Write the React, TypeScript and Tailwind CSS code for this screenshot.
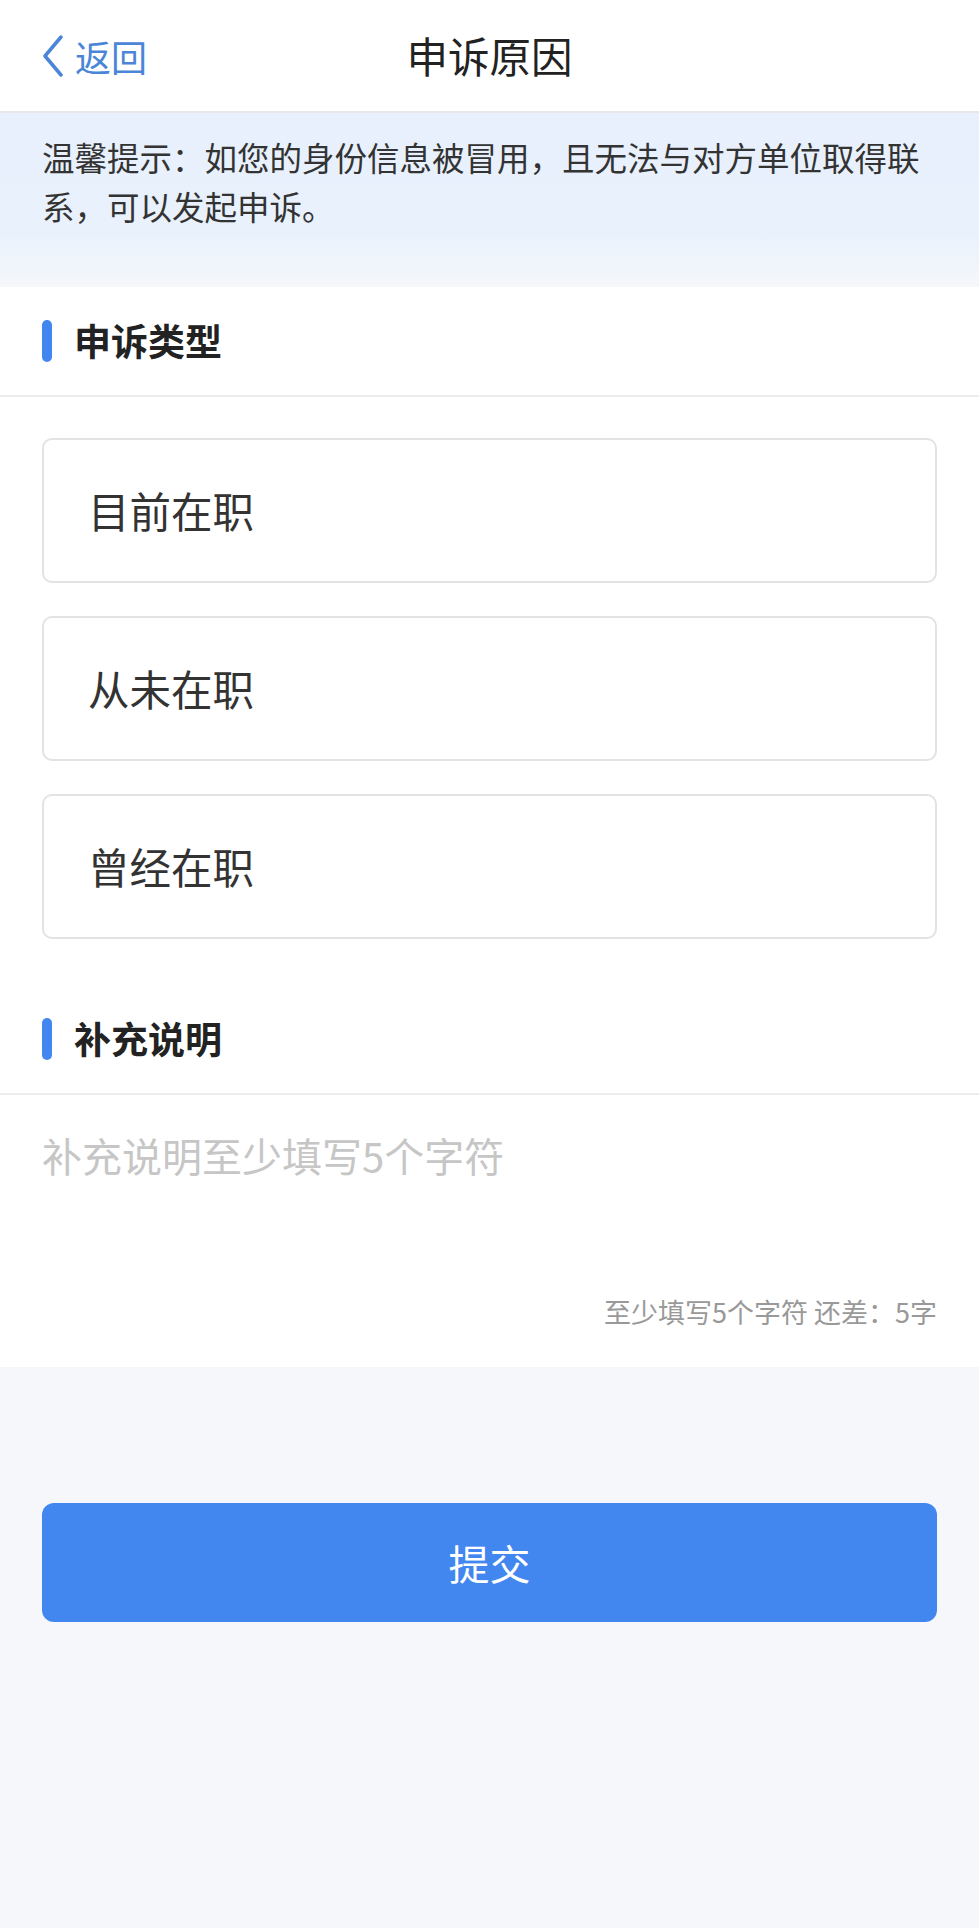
import { useState } from 'react'

const OPTIONS = ['目前在职', '从未在职', '曾经在职']

function SectionTitle({ title }: { title: string }) {
  return (
    <div className="flex h-[110px] items-center gap-[22px] border-b-2 border-[#ededed] px-[42px]">
      <span className="h-[42px] w-[10px] rounded-full bg-[#4286f0]" />
      <h2 className="text-[37px] font-bold text-[#222]">{title}</h2>
    </div>
  )
}

export default function App() {
  const [selected, setSelected] = useState<string | null>(null)
  const [note, setNote] = useState('')
  const remain = Math.max(0, 5 - note.length)

  return (
    <div className="min-h-[1928px] bg-[#f5f7fa] font-['Noto_Sans_CJK_SC',sans-serif]">
      {/* Header */}
      <header className="grid h-[113px] grid-cols-[1fr_auto_1fr] items-center border-b-2 border-[#e8e8e8] bg-white">
        <button className="flex items-center gap-[11px] pl-[42px] text-[36px] text-[#4a85d8]">
          <svg width="22" height="42" viewBox="0 0 22 42" fill="none">
            <polyline points="19,2 3,21 19,40" stroke="#4a85d8" strokeWidth="3.5" strokeLinecap="round" strokeLinejoin="round" />
          </svg>
          返回
        </button>
        <h1 className="text-[41.5px] text-[#222]">申诉原因</h1>
        <div />
      </header>

      {/* Tip banner */}
      <div className="bg-[linear-gradient(180deg,#e7f0fc_0%,#e8f1fc_68%,#f5f7fa_100%)] px-[42px] pt-[19px] pb-[57px]">
        <p className="text-[32.5px] leading-[49px] text-[#333]">
          温馨提示：如您的身份信息被冒用，且无法与对方单位取得联系，可以发起申诉。
        </p>
      </div>

      {/* Type */}
      <section className="bg-white">
        <SectionTitle title="申诉类型" />
        <div className="flex flex-col gap-[33px] px-[42px] pt-[41px] pb-[46px]">
          {OPTIONS.map((o) => (
            <button
              key={o}
              onClick={() => setSelected(o)}
              className={
                'flex h-[145px] items-center rounded-[10px] border-2 bg-white pl-[44px] text-left text-[41.5px] text-[#333] ' +
                (selected === o ? 'border-[#4286f0]' : 'border-[#e3e3e3]')
              }
            >
              {o}
            </button>
          ))}
        </div>

        <SectionTitle title="补充说明" />
        <textarea
          value={note}
          onChange={(e) => setNote(e.target.value)}
          placeholder="补充说明至少填写5个字符"
          className="block h-[197px] w-full resize-none px-[42px] pt-[30px] text-[40px] leading-[60px] text-[#333] outline-none placeholder:text-[#c6c6c6]"
        />
        <p className="px-[42px] pb-[35px] text-right text-[27px] leading-[40px] text-[#999]">
          至少填写5个字符 还差：{remain}字
        </p>
      </section>

      {/* Submit */}
      <div className="px-[42px] pt-[136px]">
        <button className="flex h-[119px] w-full items-center justify-center rounded-[12px] bg-[#4286f0] text-[41px] text-white">
          提交
        </button>
      </div>
    </div>
  )
}
